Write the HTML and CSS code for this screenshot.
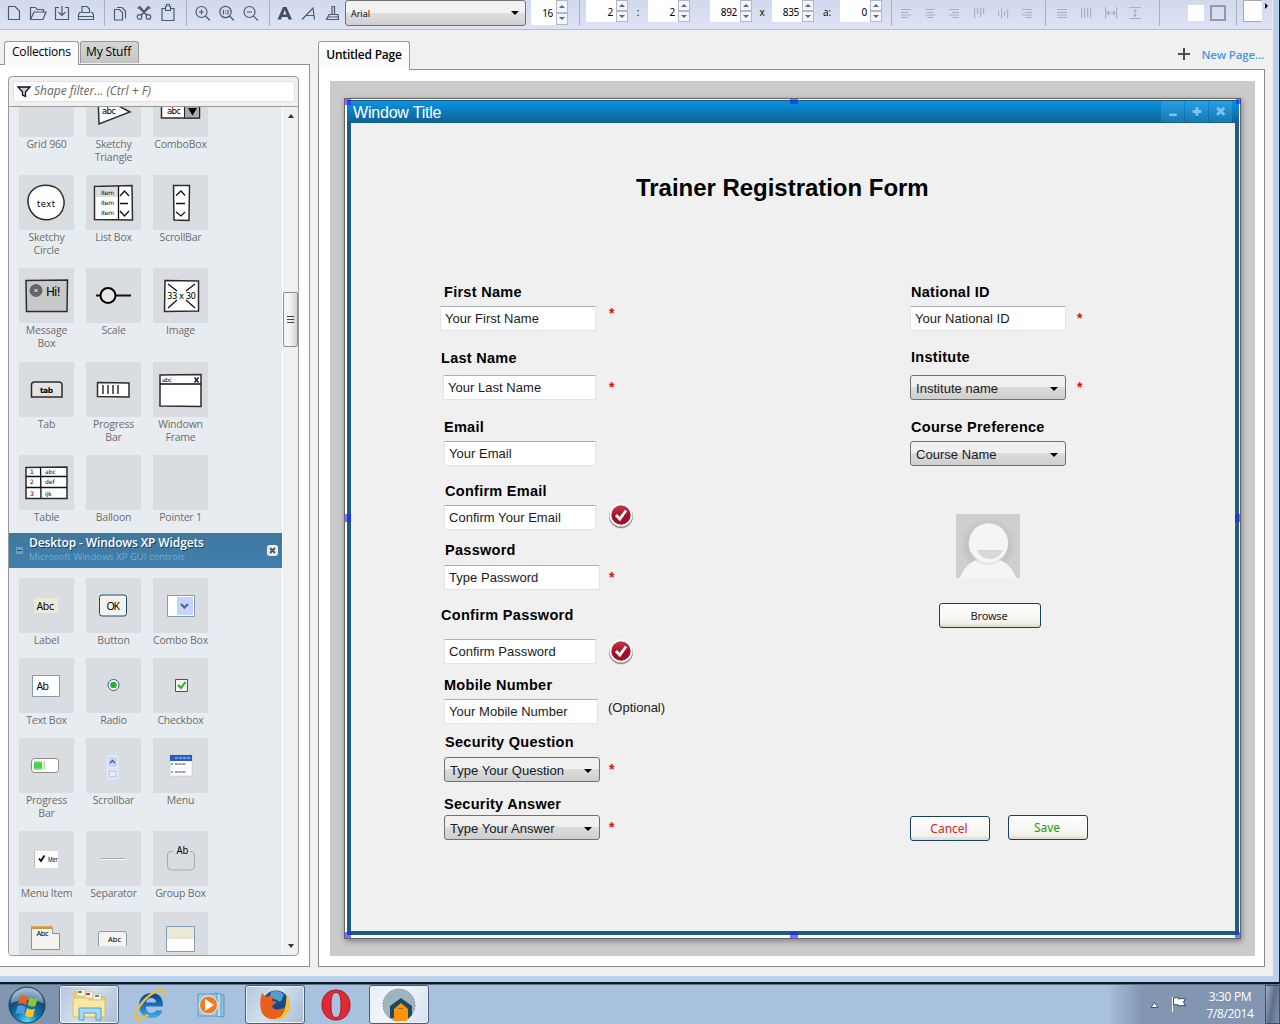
FILE: index.html
```html
<!DOCTYPE html>
<html lang="en">
<head>
<meta charset="utf-8">
<title>Untitled Page</title>
<link rel="stylesheet" href="styles.css">
</head>
<body>
<div class="desktop">
  <div class="app">
    <div class="toolbar">
      <div class="tools">
        <svg viewBox="0 0 24 24"><path d="M7 6.500h6l4.500 4.500v8.500H6.500V6.500z"/></svg>
        <svg viewBox="0 0 24 24"><path d="M4.500 19V7.500h5l1.500 2h6.500V12M4.500 19.500l3.500-7.500h12l-3 7.500z"/></svg>
        <svg viewBox="0 0 24 24"><path d="M9 7.500H5.500v12h13v-12H15M12 6v9M8.500 12l3.500 3.500 3.500-3.500"/></svg>
        <svg viewBox="0 0 24 24"><path d="M8 13V6.500h5l2.500 2.500v4M7 12.500H5.500l-1 2.500v4.500h15V15l-1-2.500H17M8 12.500h8M5 16.500h14"/></svg>
      </div>
      <i class="sep s1"></i>
      <div class="tools">
        <svg viewBox="0 0 24 24"><path d="M6.500 9.500h5l3 3v7.500h-8zM9 7.500h5l3.500 3.500v7.500"/></svg>
        <svg viewBox="0 0 24 24"><path d="M6 7l9 8.500M18 7l-9 8.500M5.500 8.500L8 6.500l6.500 8M18.500 8.500L16 6.500l-6.500 8"/><circle cx="7.500" cy="17" r="2.300"/><circle cx="16.500" cy="17" r="2.300"/></svg>
        <svg viewBox="0 0 24 24"><path d="M9 8.500H6v12h12v-12h-3M9.500 10.500v-4h1v-2h3v2h1v4z"/></svg>
      </div>
      <i class="sep s2"></i>
      <div class="tools">
        <svg viewBox="0 0 24 24"><circle cx="10.500" cy="12" r="5.500"/><path d="M14.500 16l4.500 4.500M8 12h5M10.500 9.500v5"/></svg>
        <svg viewBox="0 0 24 24"><circle cx="10.500" cy="12" r="5.700"/><path d="M14.500 16l4.500 4.500M8.500 10v4.500M13 10v4.500M10.800 10.500v1M10.800 13v1"/></svg>
        <svg viewBox="0 0 24 24"><circle cx="10.500" cy="12" r="5.500"/><path d="M14.500 16l4.500 4.500M8 12h5"/></svg>
      </div>
      <i class="sep s3"></i>
      <div class="tools tools-text">
        <svg viewBox="0 0 24 24"><path class="solid" d="M4.500 19.500L10 7h3.500L19 19.500h-3.500l-1-2.500H9l-1 2.500zM10 14.500h3.500L11.800 10z"/></svg>
        <svg viewBox="0 0 24 24"><path d="M5 19.500L16 8l1.500 11.500M8.500 15.500h8.500"/></svg>
        <svg viewBox="0 0 24 24"><path d="M11 14V6.500h2.500V14M8 14.500h9l.500 5h-12zM7 17h11"/></svg>
      </div>
      <div class="fontbox"><span>Arial</span><b class="caret"></b></div>
      <div class="spin sp-size"><span>16</span><em><b></b><b></b></em></div>
      <i class="sep s4"></i>
      <div class="spin sp-x"><span>2</span><em><b></b><b></b></em></div>
      <label class="colon">:</label>
      <div class="spin sp-y"><span>2</span><em><b></b><b></b></em></div>
      <div class="spin sp-w"><span>892</span><em><b></b><b></b></em></div>
      <label class="times">x</label>
      <div class="spin sp-h"><span>835</span><em><b></b><b></b></em></div>
      <label class="angle">a:</label>
      <div class="spin sp-a"><span>0</span><em><b></b><b></b></em></div>
      <i class="sep s5"></i>
      <div class="tools dim">
        <svg viewBox="0 0 24 24"><path d="M6 9.500h10M6 12.500h7M6 15h10M6 17.500h7"/></svg>
        <svg viewBox="0 0 24 24"><path d="M6 9.500h10M8 12.500h6M6 15h10M8 17.500h6"/></svg>
        <svg viewBox="0 0 24 24"><path d="M6 9.500h10M9 12.500h7M6 15h10M9 17.500h7"/></svg>
        <svg viewBox="0 0 24 24"><path d="M6.500 8v10M9.500 8v6M12.500 8v9M15.500 8v6"/></svg>
        <svg viewBox="0 0 24 24"><path d="M6.500 11v5M9.500 8.500v10M12.500 11v5M15.500 9v9"/></svg>
        <svg viewBox="0 0 24 24"><path d="M6 9.500h10M9 12.500h7M6 15h10M9 17.500h7"/></svg>
      </div>
      <i class="sep s6"></i>
      <div class="tools dim">
        <svg viewBox="0 0 24 24"><path d="M6 9.500h10M6 12.500h10M6 15h10M6 17.500h10"/></svg>
        <svg viewBox="0 0 24 24"><path d="M6.500 8v10M9.500 8v10M12.500 8v10M15.500 8v10"/></svg>
        <svg viewBox="0 0 24 24"><path d="M5.500 7v12M16.500 7v12M7 13h8M9 11l-2 2 2 2M13 11l2 2-2 2"/></svg>
        <svg viewBox="0 0 24 24"><path d="M5 7.500h12M5 18.500h12M11 9v8M9.500 10.500h3M9.500 15.500h3"/></svg>
      </div>
      <i class="sep s7"></i>
      <i class="swatch"></i><i class="swatch ring"></i>
      <i class="sep s8"></i>
      <i class="linebox"></i><i class="more"></i>
    </div>

    <div class="workspace">
      <div class="side">
        <div class="tabs"><span class="tab active">Collections</span><span class="tab">My Stuff</span></div>
        <div class="side-panel">
          <div class="palette">
            <div class="filter"><div class="filter-input">
              <svg width="14" height="12" viewBox="0 0 14 12"><path d="M1 1h12L8.500 6v4.500l-3-1.500V6z" fill="#c3cfdf" stroke="#111" stroke-width="1.300"/></svg>
              <span>Shape filter... (Ctrl + F)</span></div></div>
            <div class="palette-body">
              <div class="shapes">
                <div class="grid sketchy">
                  <div class="item"><svg viewBox="0 0 55 55"></svg><p>Grid 960</p></div>
                  <div class="item"><svg viewBox="0 0 55 55"><path class="box" d="M12 13l32 17-31 12z"/><text class="hand" x="16" y="32" textLength="14">abc</text></svg><p>Sketchy Triangle</p></div>
                  <div class="item"><svg viewBox="0 0 55 55"><path class="box" d="M8.500 22h38v14h-38z"/><path fill="#aaa" stroke="#222" d="M31.500 22h15v14h-15z"/><path d="M35 26h9l-4.500 7.500z"/><text class="hand" x="14" y="32" textLength="14">abc</text></svg><p>ComboBox</p></div>
                  <div class="item"><svg viewBox="0 0 55 55"><path class="box" d="M23 10.500Q32 9 39 14q7 7 6 16-2 12-14 14.500-12 2-19-8Q7 28 10 20q4-8 13-9.500z"/><text class="hand" x="18" y="32" textLength="18">text</text></svg><p>Sketchy Circle</p></div>
                  <div class="item"><svg viewBox="0 0 55 55"><path class="box" d="M8.500 11.500L46 10.500l.500 34.500-38-.500z"/><path fill="#ddd" d="M10 12h22v10H10z"/><path class="ink" d="M32.500 11v33.500M34 21l4.500-5 4.500 5M34 28.500h8M34 36l4.500 5 4.500-5"/><text class="hand tiny" x="15" y="20" textLength="13">item</text><text class="hand tiny" x="15" y="30" textLength="13">item</text><text class="hand tiny" x="15" y="40" textLength="13">item</text></svg><p>List Box</p></div>
                  <div class="item"><svg viewBox="0 0 55 55"><path class="box" d="M20.500 10.500h16l-.500 35-15-.500z"/><path class="ink" d="M23 20.500l5-4.500 4 4.500M23 28.500h9M23 37l5 4 4-4"/></svg><p>ScrollBar</p></div>
                  <div class="item"><svg viewBox="0 0 55 55"><path class="box shade" d="M7 12.500l41.500-.500-.500 31.500H7.500z"/><circle cx="17" cy="22.500" r="6.500" fill="#666"/><path d="M15.500 21l3 3m0-3l-3 3" stroke="#fff"/><text class="hand" x="27" y="28" font-size="12" textLength="15">Hi!</text></svg><p>Message Box</p></div>
                  <div class="item"><svg viewBox="0 0 55 55"><path class="ink" d="M10 27.500h35" style="stroke-width:2"/><circle cx="22" cy="27.500" r="7.500" fill="#e8e8e8" stroke="#000" stroke-width="2"/></svg><p>Scale</p></div>
                  <div class="item"><svg viewBox="0 0 55 55"><path class="box" d="M12 12.500l33.500.500v30l-34 .500z"/><path class="ink" d="M15 16l9 7M42 16l-9 7M15 40l9-8M42 40l-9-8"/><text class="hand" x="14" y="31" textLength="29">33 x 30</text></svg><p>Image</p></div>
                  <div class="item"><svg viewBox="0 0 55 55"><path class="box pale" d="M12.500 35V23q0-3 3-3h24q3.500 0 3.500 3v12z"/><text class="hand heavytxt" x="21" y="31" textLength="13">tab</text></svg><p>Tab</p></div>
                  <div class="item"><svg viewBox="0 0 55 55"><path class="box" d="M11.500 20.500l31.500.500v14l-31.500-.500z"/><path class="ink" d="M17 23v9M22 23v9M27 23v9M32 23v9"/></svg><p>Progress Bar</p></div>
                  <div class="item"><svg viewBox="0 0 55 55"><path class="box" d="M7 13l41-.500v32L7 44z"/><path class="ink" d="M7 22h41M41.500 15.500l4 5m0-5l-4 5"/><text class="hand tiny" x="9" y="20" textLength="10">abc</text></svg><p>Windown Frame</p></div>
                  <div class="item"><svg viewBox="0 0 55 55"><path class="box" d="M7 12.500l41-.500v31.500H7z"/><path class="ink" d="M7 21.500h41M7 32.500h41M21.500 12l.500 31"/><text class="hand tiny" x="11" y="19">1</text><text class="hand tiny" x="11" y="29">2</text><text class="hand tiny" x="11" y="41">3</text><text class="hand tiny" x="26" y="19">abc</text><text class="hand tiny" x="26" y="29">def</text><text class="hand tiny" x="26" y="41">ijk</text></svg><p>Table</p></div>
                  <div class="item"><svg viewBox="0 0 55 55"></svg><p>Balloon</p></div>
                  <div class="item"><svg viewBox="0 0 55 55"></svg><p>Pointer 1</p></div>
                </div>
                <div class="collection">
                  <svg class="fold" width="7" height="7" viewBox="0 0 7 7"><path d="M0 0h7v7H0z" fill="#6f9cbc"/><path d="M1 3.500h5" stroke="#1f4b6d"/></svg>
                  <div><h3>Desktop - Windows XP Widgets</h3><small>Microsoft Windows XP GUI controls</small></div>
                  <svg class="close" width="11" height="11" viewBox="0 0 11 11"><rect width="11" height="11" rx="3" fill="#eee"/><path d="M3 3l5 5m0-5L3 8" stroke="#555" stroke-width="2"/></svg>
                </div>
                <div class="grid xp">
                  <div class="item"><svg viewBox="0 0 55 55"><path fill="#ece9d8" d="M15 20h24v15H15z"/><text class="ui" x="17.500" y="32" textLength="17.500">Abc</text></svg><p>Label</p></div>
                  <div class="item"><svg viewBox="0 0 55 55"><rect x="13.500" y="17" width="27" height="21" rx="2.500" fill="#f4f4ef" stroke="#194a74"/><text class="ui" x="20.500" y="32" textLength="13.500">OK</text></svg><p>Button</p></div>
                  <div class="item"><svg viewBox="0 0 55 55"><path fill="#fff" stroke="#7f9db9" d="M14.500 17.500h27v21h-27z"/><path fill="#c4d4fb" d="M24 19h16v18H24z"/><path d="M28 26l3.500 3.500L35 26" fill="none" stroke="#4d6185" stroke-width="2"/></svg><p>Combo Box</p></div>
                  <div class="item"><svg viewBox="0 0 55 55"><path fill="#fff" stroke="#7f9db9" d="M13.500 17.500h27v21h-27z"/><text class="ui" x="17.500" y="32" textLength="12.500">Ab</text></svg><p>Text Box</p></div>
                  <div class="item"><svg viewBox="0 0 55 55"><circle cx="27.500" cy="27" r="5.500" fill="#fff" stroke="#2c5c8c"/><circle cx="27.500" cy="27" r="3.300" fill="#2fb02f"/></svg><p>Radio</p></div>
                  <div class="item"><svg viewBox="0 0 55 55"><path fill="#f4f4f0" stroke="#2c5c8c" d="M22.500 21.500h12v12h-12z"/><path d="M25 27l3 3 4.500-6" fill="none" stroke="#2ba62b" stroke-width="2"/></svg><p>Checkbox</p></div>
                  <div class="item"><svg viewBox="0 0 55 55"><rect x="12.500" y="20.500" width="27" height="14" rx="3" fill="#fff" stroke="#8c8c80"/><path fill="#41d641" d="M15 23h8v9h-8z"/><path fill="#9be89b" d="M15 23h8v1.500h-8zM15 30.500h8V32h-8zM24.500 23h1.500v9h-1.500z"/></svg><p>Progress Bar</p></div>
                  <div class="item"><svg viewBox="0 0 55 55"><path fill="#c4d4fb" stroke="#eef" d="M21.500 18.500h10v11h-10zM21.500 31.500h10v9h-10z"/><path d="M24 25l2.500-2.500L29 25" fill="none" stroke="#4d6185" stroke-width="1.500"/><path fill="#e6eeff" d="M24 34h5v4h-5z"/></svg><p>Scrollbar</p></div>
                  <div class="item"><svg viewBox="0 0 55 55"><path fill="#fff" stroke="#bbb" stroke-width=".5" d="M17 17h22v21H17z"/><path fill="#2c5bc4" d="M17 17h22v6H17z"/><path d="M22 20h15" stroke="#c9d6f4" stroke-dasharray="3 1"/><path d="M18 26h2m2 0h11M18 34h2m2 0h11" stroke="#444" stroke-dasharray="3 .5"/><path d="M18 30h20" stroke="#ddd" stroke-width=".5"/></svg><p>Menu</p></div>
                  <div class="item"><svg viewBox="0 0 55 55"><path fill="#fff" d="M16 20h23v17H16z"/><path d="M15.500 20v17" stroke="#bbb"/><path d="M20 27.500l2 2.500 3.500-5.500" fill="none" stroke="#000" stroke-width="1.800"/><text class="ui mini" x="29" y="31" textLength="10" lengthAdjust="spacingAndGlyphs">Mer</text></svg><p>Menu Item</p></div>
                  <div class="item"><svg viewBox="0 0 55 55"><path d="M15 27.500h24" stroke="#aca899"/><path d="M15 28.500h24" stroke="#fff"/></svg><p>Separator</p></div>
                  <div class="item"><svg viewBox="0 0 55 55"><path d="M20 20.500h-2q-3.500 0-3.500 3.500v11q0 4 4 4h19q4 0 4-4V24q0-3.500-3.500-3.500h-1" fill="none" stroke="#aaa"/><text class="ui" x="23.500" y="23" textLength="12" lengthAdjust="spacingAndGlyphs">Ab</text></svg><p>Group Box</p></div>
                  <div class="item"><svg viewBox="0 0 55 55"><path fill="#f4f3ee" stroke="#8a949c" d="M12.500 16.500h21v5h7v16h-28z"/><path d="M12 15.500h21.500" stroke="#e5962c" stroke-width="2.500"/><text class="ui mini" x="17.500" y="23.500" textLength="12">Abc</text></svg></div>
                  <div class="item"><svg viewBox="0 0 55 55"><path fill="#f4f4ee" stroke="#8a9ca8" d="M12.500 34V22q0-2.500 2.500-2.500h23q2.500 0 2.500 2.500v12"/><text class="ui mini" x="22" y="29.500" textLength="13">Abc</text></svg></div>
                  <div class="item"><svg viewBox="0 0 55 55"><path fill="#fff" stroke="#7f9db9" d="M13.500 14.500h28v25h-28z"/><path fill="#ece9d8" d="M14 15h27v10H14z"/><path d="M14 26h27" stroke="#cbc7b8"/></svg></div>
                </div>
              </div>
              <div class="scrollbar"><b class="up"></b><div class="thumb"><i></i></div><b class="down"></b></div>
            </div>
          </div>
        </div>
      </div>

      <div class="main">
        <div class="page-tabs"><span class="page-tab">Untitled Page</span>
          <div class="new-page"><svg width="12" height="12" viewBox="0 0 12 12"><path d="M6 0v12M0 6h12" stroke="#444f58" stroke-width="2"/></svg><span>New Page...</span></div></div>
        <div class="page-panel">
          <div class="stage">
            <div class="page">
              <div class="window">
                <div class="titlebar"><span>Window Title</span>
                  <div class="winbtns">
                    <svg viewBox="0 0 23 22"><path d="M8 14.500h8" stroke="#7cc4ee" stroke-width="2.500"/></svg>
                    <svg viewBox="0 0 23 22"><path d="M12 6.500v9M7.500 11h9" stroke="#7cc4ee" stroke-width="3"/></svg>
                    <svg viewBox="0 0 23 22"><path d="M8 7l7.500 7.500m0-7.500L8 14.500" stroke="#7cc4ee" stroke-width="3"/></svg>
                  </div></div>
                <div class="canvas">
                  <h1 class="w-title">Trainer Registration Form</h1>
                  <h2 class="w-l1">First Name</h2><div class="field w-f1">Your First Name</div><b class="star w-s1">*</b>
                  <h2 class="w-l2">Last Name</h2><div class="field w-f2">Your Last Name</div><b class="star w-s2">*</b>
                  <h2 class="w-l3">Email</h2><div class="field w-f3">Your Email</div>
                  <h2 class="w-l4">Confirm Email</h2><div class="field w-f4">Confirm Your Email</div>
                  <svg class="badge w-b1" viewBox="0 0 26 28"><defs><linearGradient id="red" x2="0" y2="1"><stop offset="0" stop-color="#c23a4c"/><stop offset=".55" stop-color="#a50f26"/><stop offset="1" stop-color="#a01024"/></linearGradient></defs><circle cx="13" cy="14.500" r="12" fill="#0003"/><circle cx="13" cy="14" r="11.800" fill="#777"/><circle cx="13" cy="13" r="11.600" fill="#fff"/><circle cx="13" cy="13" r="9.700" fill="url(#red)"/><path d="M8 13l3.800 4L18 8.500" fill="none" stroke="#fff" stroke-width="2.800"/></svg>
                  <h2 class="w-l5">Password</h2><div class="field w-f5">Type Password</div><b class="star w-s5">*</b>
                  <h2 class="w-l6">Confirm Password</h2><div class="field w-f6">Confirm Password</div>
                  <svg class="badge w-b2" viewBox="0 0 26 28"><circle cx="13" cy="14.500" r="12" fill="#0003"/><circle cx="13" cy="14" r="11.800" fill="#777"/><circle cx="13" cy="13" r="11.600" fill="#fff"/><circle cx="13" cy="13" r="9.700" fill="url(#red)"/><path d="M8 13l3.800 4L18 8.500" fill="none" stroke="#fff" stroke-width="2.800"/></svg>
                  <h2 class="w-l7">Mobile Number</h2><div class="field w-f7">Your Mobile Number</div><span class="hint w-opt">(Optional)</span>
                  <h2 class="w-l8">Security Question</h2><div class="combo w-f8">Type Your Question</div><b class="star w-s8">*</b>
                  <h2 class="w-l9">Security Answer</h2><div class="combo w-f9">Type Your Answer</div><b class="star w-s9">*</b>
                  <h2 class="w-l10">National ID</h2><div class="field w-f10">Your National ID</div><b class="star w-s10">*</b>
                  <h2 class="w-l11">Institute</h2><div class="combo w-f11">Institute name</div><b class="star w-s11">*</b>
                  <h2 class="w-l12">Course Preference</h2><div class="combo w-f12">Course Name</div>
                  <svg class="avatar" viewBox="0 0 64 64"><defs><radialGradient id="halo"><stop offset=".68" stop-color="#c0c0c0"/><stop offset="1" stop-color="#cfcfcf"/></radialGradient></defs><path fill="#cfcfcf" d="M0 0h64v64H0z"/><circle cx="32" cy="31" r="28" fill="url(#halo)"/><path d="M4 64c4-12 13-20 28-20s24 8 28 20z" fill="#f5f5f5"/><circle cx="32" cy="31" r="20" fill="#d4d4d4" opacity=".55"/><circle cx="32.500" cy="29" r="19.700" fill="#f5f5f5"/><path d="M21 36h26q-4 9-13 9t-13-9z" fill="#d8d8d8"/></svg>
                  <div class="xpbtn w-browse">Browse</div>
                  <div class="xpbtn w-cancel">Cancel</div>
                  <div class="xpbtn w-save">Save</div>
                </div>
              </div>
              <i class="handle h-nw"></i><i class="handle h-n"></i><i class="handle h-ne"></i><i class="handle h-w"></i><i class="handle h-e"></i><i class="handle h-sw"></i><i class="handle h-s"></i><i class="handle h-se"></i>
            </div>
          </div>
        </div>
      </div>
    </div>
  </div>

  <div class="taskbar">
    <div class="start"><svg width="38" height="38" viewBox="0 0 38 38"><defs><radialGradient id="orb" cx=".5" cy=".95" r=".85"><stop offset="0" stop-color="#4fe0ff"/><stop offset=".35" stop-color="#157cb4"/><stop offset=".75" stop-color="#174a74"/><stop offset="1" stop-color="#7d9ebc"/></radialGradient></defs><circle cx="19" cy="19" r="18" fill="url(#orb)" stroke="#1c3c58"/><path d="M3 17a16 15 0 0 1 32 0q-16-6-32 0z" fill="#b6cfe0" opacity=".5"/><path d="M12 10q4-2 8 1l-2 8q-4-3-8-1z" fill="#e8602c"/><path d="M21.500 11.500q4 2.500 8 .5l-2 8q-4 2-8-1z" fill="#8cc63c"/><path d="M9.500 20q4-2 8 1l-2 8q-4-3-8-1z" fill="#4a9be0"/><path d="M19 22q4 2.500 8 .5l-2 8q-4 2-8-1z" fill="#fbc52c"/></svg></div>
    <div class="task open"><svg width="36" height="34" viewBox="0 0 36 34"><path d="M3 4h10l2 3h8l2 2h9v20H3z" fill="#f0d27c" stroke="#d7b456"/><path d="M6 2h8v6H6zM14 4h8v6h-8zM22 6h8v6h-8z" fill="#fff" stroke="#c8b578" stroke-width=".7"/><path d="M7 3h4v2H7z" fill="#3aa53a"/><path d="M15 5h4v2h-4z" fill="#d33b2c"/><path d="M24 7h4v2h-4z" fill="#3c86d2"/><path d="M2 10h14l2 2h16v17H2z" fill="#f8e8a6" stroke="#e0c069"/><path d="M8 32V20h22v12h-5v-7H13v7z" fill="#a6d9f0" stroke="#4ea0cc"/></svg></div>
    <div class="task"><svg width="36" height="36" viewBox="0 0 36 36"><defs><linearGradient id="ie" x2="0" y2="1"><stop offset="0" stop-color="#123f86"/><stop offset=".5" stop-color="#1c6fc0"/><stop offset="1" stop-color="#35b4ec"/></linearGradient></defs><path d="M31 19.500H14c0 4.500 2.500 6.500 5.500 6.500 2 0 3.500-.7 4.500-2.500h6.500C29 28.500 25 31 19.500 31 12 31 7 26 7 18.500S12 6 19.500 6 31.500 11 31 19.500zM14.200 15.500h10c-.3-3-2.200-4.500-5-4.500s-4.500 1.500-5 4.500z" fill="url(#ie)"/><path d="M16 27.500C9 33.500 4 34 3.500 30 3 24 12 11 22 5.500c8-4.500 12-3 9 3.500" fill="none" stroke="#eebd3c" stroke-width="2.400"/></svg></div>
    <div class="task"><svg width="32" height="32" viewBox="0 0 32 32"><path d="M21 5l7 1v22l-7-1z" fill="#8fc6df" stroke="#5096b8"/><path d="M18 4l7 1v23l-7-1z" fill="#b8dcec" stroke="#5ba1c2"/><path d="M2 5h19v22H2z" fill="#9ccbe4" stroke="#5a9cc0"/><circle cx="12.500" cy="16" r="9" fill="#f07a20" stroke="#fff" stroke-width=".8"/><path d="M9 10l9 6-9 6z" fill="#fff"/></svg></div>
    <div class="task open"><svg width="32" height="32" viewBox="0 0 32 32"><circle cx="17" cy="15" r="13.500" fill="#174a86"/><path d="M12 3q8-3 13 3-2 2-2 5-3 3-5 0-4-1-7-4z" fill="#4fa0cf"/><path d="M27 5q6 8 3 17-5 10-16 9 10-3 12-12 2-8 1-14z" fill="#f8c22c"/><path d="M3 4l4 4q4-2 8 0-3 3-1 4l4 1-5 4q2 5 8 3 3 0 5-2-2 9-10 12-11 1-14-9Q0 12 3 4z" fill="#e8601c"/></svg></div>
    <div class="task"><svg width="30" height="32" viewBox="0 0 30 32"><path fill-rule="evenodd" d="M15 1c8 0 14 6 14 15s-6 15-14 15S1 25 1 16 7 1 15 1zm0 2.500c-4 0-5 5-5 12.500s1 12.500 5 12.500 5-5 5-12.500-1-12.500-5-12.500z" fill="#df2a35" stroke="#a81820"/></svg></div>
    <div class="task open lit"><svg width="34" height="34" viewBox="0 0 34 34"><circle cx="17" cy="17" r="16" fill="#9fb4bf" stroke="#8298a6" stroke-dasharray="2 1"/><path d="M8 30V18l11-8 11 8v9l-4 4z" fill="#1f4a5e"/><path d="M12 33V21l7-6 7 6v10l-2 2z" fill="#ff9407"/><path d="M16 20.500h5" stroke="#a86a20"/></svg></div>
    <div class="tray"><svg width="9" height="6" viewBox="0 0 9 6"><path d="M4.500 .5L8 5.500H1z" fill="#fff" stroke="#456"/></svg>
      <svg width="17" height="17" viewBox="0 0 17 17"><path d="M1.500 1v15M2.500 2q3-1 5 0v1q3-1 7 0l-2 3 2 4q-4-1-7 0V9q-2-1-5 0z" fill="#fff" stroke="#344a60"/><path d="M1.500 1v15" stroke="#fff"/></svg>
      <div class="clock"><span>3:30 PM</span><span>7/8/2014</span></div></div>
    <div class="peek"></div>
  </div>
</div>
</body>
</html>
```
FILE: styles.css
```css
* { box-sizing: border-box; }
body { margin: 0; width: 1280px; height: 1024px; overflow: hidden; font-family: "Open Sans", "Noto Sans", sans-serif; font-size: 12px; color: #000; }
h1, h2, h3, p { margin: 0; }
i, em { font-style: normal; }
.desktop { display: flex; flex-direction: column; height: 1024px; }
.app { height: 984px; display: flex; flex-direction: column; background: #f0f0f0; border-right: 1px solid #0c2836; border-bottom: 2px solid #0a1a24; box-shadow: inset -6px 0 #b9d1ea, inset 0 -6px #b9d1ea; padding: 0 7px 7px 0; flex: none; }

/* toolbar */
.toolbar { display: flex; height: 30px; flex: none; background: linear-gradient(#d2d9ed, #dde3f5); border-bottom: 1px solid #b3bbd6; padding-left: 2px; }
.tools { display: flex; height: 24px; }
.tools svg { width: 24px; height: 24px; fill: none; stroke: #4d5c69; stroke-width: 1.2; flex: none; }
.tools svg .solid { fill: #43525e; fill-rule: evenodd; stroke: none; }
.tools.dim svg { stroke: #a9b0c6; width: 24.2px; }
.sep { width: 1px; height: 26px; background: #aab0c2; flex: none; }
.s1 { margin: 0 3px 0 6px; }
.s2 { margin: 0 4px 0 6px; }
.s3 { margin: 0 3px 0 6px; }
.s4 { margin: 0 6px 0 11px; }
.s5 { margin: 0 3px 0 9px; }
.s6 { margin: 0 5px 0 5px; }
.s7 { margin: 0 28px 0 11px; }
.s8 { margin: 0 6px 0 10px; }
.tools-text { width: 72px; }
.fontbox { width: 181px; height: 26px; flex: none; border: 1px solid #707070; border-radius: 3px; background: linear-gradient(#f2f2f2 0 50%, #dedede 51%, #d0d0d0); display: flex; align-items: center; justify-content: space-between; padding: 0 6px 0 5px; font-size: 9px; }
.caret { width: 0; height: 0; border: 4px solid transparent; border-top-color: #000; border-bottom: 0; }
.spin { display: flex; justify-content: flex-end; flex: none; width: 42px; height: 22px; background: #fff; font: 10px/24px "Noto Sans", sans-serif; letter-spacing: -.3px; }
.spin em { display: flex; flex-direction: column; width: 12px; margin-left: 3px; }
.spin b { flex: 1; border: 1px solid #b4b8c2; background: #f4f5f8; display: flex; align-items: center; justify-content: center; }
.spin b::after { content: ""; border: 3px solid transparent; border-bottom: 3px solid #55689a; border-top: 0; }
.spin b + b::after { border-bottom: 0; border-top: 3px solid #55689a; }
.sp-size { width: 37px; height: 25px; margin-left: 5px; line-height: 27px; }
.toolbar label { font-size: 10px; line-height: 24px; text-align: center; flex: none; }
.colon { width: 20px; }
.sp-w { margin-left: 20px; }
.times { width: 20px; }
.angle { width: 26px; }
.swatch { width: 16px; height: 16px; margin: 5px 6px 0 0; background: #fff; flex: none; }
.ring { border: 2px solid #9299ad; background: none; margin-right: 0; }
.linebox { width: 19px; height: 22px; border: 1px solid #aaa; border-right: 0; background: #fff; flex: none; }
.more { border: 3px solid transparent; border-left-color: #000; border-right: 0; height: 0; margin: 3px 0 0 3px; }

/* workspace */
.workspace { display: flex; height: 937px; gap: 8px; padding-top: 11px; flex: none; }
.side { width: 310px; flex: none; display: flex; flex-direction: column; }
.tabs { display: flex; gap: 1px; padding-left: 4px; height: 23px; }
.tab { height: 22px; border: 1px solid #999; border-bottom: 0; border-radius: 3px 3px 0 0; background: linear-gradient(#d6d6d6, #c4c4c4); line-height: 20px; width: 59px; white-space: nowrap; padding: 0 0 0 5px; letter-spacing: -.15px; }
.tab.active { width: 75px; height: 24px; background: #fafafa; padding-left: 7px; margin-bottom: -1px; z-index: 1; letter-spacing: -.2px; }
.side-panel { height: 903px; border: 1px solid #8f9096; border-left: 0; background: #fff; padding: 11px 10px 10px 8px; }
.palette { height: 880px; border: 1px solid #98999c; border-radius: 4px; background: #f0f0f0; overflow: hidden; display: flex; flex-direction: column; }
.filter { height: 30px; flex: none; padding: 4px 3px 4px 4px; border-bottom: 1px solid #98999c; }
.filter-input { height: 21px; background: #fff; border: 1px solid #e2e3ea; display: flex; align-items: center; gap: 3px; padding-left: 3px; font: italic 12px/17px "Open Sans", sans-serif; color: #666; }
.filter-input span { margin-top: -2px; }
.palette-body { display: flex; flex: 1; min-height: 0; }
.shapes { width: 273px; background: #e7ecf0; overflow: hidden; flex: none; }
.grid { display: grid; grid-template-columns: repeat(3, 55px); column-gap: 12px; padding-left: 10px; }
.sketchy { margin-top: -25px; grid-template-rows: 93px 93px 94px 93px 78px; }
.xp { margin-top: 10px; grid-template-rows: 80px 80px 93px 81px 55px; }
.item { display: flex; flex-direction: column; align-items: center; }
.item > svg { width: 55px; height: 55px; background: #d9dde1; flex: none; }
.item p { font: 10.5px/13px "Open Sans", sans-serif; color: #6d6d6d; text-align: center; width: 58px; margin-top: 1px; letter-spacing: -.2px; }
.box { fill: #fff; stroke: #2c2c2c; stroke-width: 1.5; }
.box.shade { fill: #c9c9c9; }
.box.pale { fill: #e4e4e4; }
.ink { fill: none; stroke: #111; stroke-width: 1.3; }
.hand { font-family: "DejaVu Sans", sans-serif; font-size: 8.5px; }
.hand[font-size] { font-size: 12px; }
.tiny { font-size: 6px; }
.heavytxt { font-weight: bold; font-size: 7.5px; }
.ui { font-family: "Noto Sans", sans-serif; font-size: 10.5px; }
.mini { font-size: 7.5px; }
.collection { height: 35px; background: linear-gradient(#41779c, #3e80ae); display: flex; padding-left: 7px; color: #fff; }
.collection .fold { margin: 14px 6px 0 0; }
.collection h3 { font: 600 12px/16px "Open Sans", sans-serif; margin-top: 2px; letter-spacing: -.12px; text-shadow: 1px 1px #1d4562; }
.collection small { display: block; font-size: 9.5px; line-height: 12px; color: #78abcf; }
.collection > div { width: 238px; white-space: nowrap; }
.collection .close { margin-top: 12px; }
.scrollbar { flex: 1; display: flex; flex-direction: column; align-items: center; border-left: 1px solid #fff; }
.scrollbar .up { border: 3.5px solid transparent; border-bottom: 4px solid #333; border-top: 0; margin-top: 7px; }
.scrollbar .down { border: 3.5px solid transparent; border-top: 4px solid #333; border-bottom: 0; margin-top: 597px; }
.thumb { margin-top: 174px; width: 15px; height: 55px; border: 1px solid #8e8e8e; border-radius: 2px; background: linear-gradient(90deg, #f4f4f4 45%, #d2d2d2); display: flex; align-items: center; justify-content: center; flex: none; }
.thumb i { width: 7px; height: 8px; background: repeating-linear-gradient(#444 0 1px, transparent 1px 3px); }

.main { width: 947px; display: flex; flex-direction: column; }
.page-tabs { display: flex; justify-content: space-between; height: 28px; }
.page-tab { width: 92px; height: 29px; border: 1px solid #999; border-bottom: 0; border-radius: 3px 3px 0 0; background: #fcfcfc; z-index: 1; text-align: center; font-weight: 600; line-height: 25px; letter-spacing: -.2px; white-space: nowrap; }
.new-page { display: flex; align-items: center; gap: 11px; color: #4796e6; font-weight: 600; font-size: 11.5px; letter-spacing: -.15px; padding: 0 1px 2px 0; }
.page-panel { height: 898px; border: 1px solid #8a8b91; background: #fff; padding: 11px 9px 10px 11px; }
.stage { height: 875px; background: #cbcbcb; padding: 17px 0 0 14px; }
.page { position: relative; width: 897px; height: 841px; border: 1px solid #64646c; background: #fff; box-shadow: 1px 2px 6px #0006; padding: 1px 1px 3px 2px; }
.window { height: 835px; background: #1c5d80; border-top: 1px solid #1b5578; padding: 0 4px 4px 4px; }
.titlebar { height: 22px; margin: 0 -4px; padding: 0 12px 0 6px; background: linear-gradient(#0494e6, #14608f); display: flex; justify-content: space-between; color: #fff; font: 16px/23px "Liberation Sans", Arial, sans-serif; letter-spacing: -.2px; }
.winbtns { display: flex; gap: 1px; padding-right: 1px; margin-right: -6px; }
.winbtns svg { width: 23px; height: 21px; background: linear-gradient(#26a0e8, #1878b0); }
.canvas { position: relative; height: 808px; background: #f0f0f0; font-family: "Liberation Sans", Arial, sans-serif; font-size: 13px; }
.canvas > * { position: absolute; white-space: nowrap; }
.canvas h1 { font-size: 24px; line-height: 28px; letter-spacing: -.03px; }
.canvas h2 { font-size: 14.5px; line-height: 16px; letter-spacing: .28px; }
.field { width: 152px; height: 25px; border: 1px solid #e1e3e8; border-top-color: #abadb3; border-radius: 1px; background: #fff; line-height: 23px; padding-left: 4px; letter-spacing: .03px; color: #1a1a24; }
.combo { width: 156px; height: 25px; border: 1px solid #707070; border-radius: 3px; background: linear-gradient(#f0f0f0 0 48%, #dcdcdc 50%, #cecece); line-height: 25px; padding-left: 5px; letter-spacing: .03px; color: #1a1a24; }
.combo::after { content: ""; position: absolute; right: 7px; top: 11px; border: 4px solid transparent; border-top-color: #000; border-bottom: 0; }
.star { color: #e01010; font-size: 14px; line-height: 18px; }
.hint { line-height: 16px; letter-spacing: 0; color: #222; }
.badge { width: 26px; height: 28px; }
.xpbtn { border: 1px solid #12406a; border-radius: 3px; background: linear-gradient(#fff, #f4f3ee 80%, #dcd8cc); height: 25px; line-height: 24px; text-align: center; font-family: "Noto Sans", sans-serif; font-size: 12px; }
/* widget places on the drawing canvas */
.w-title { left: 285px; top: 51px; }
.w-l1 { left: 93px; top: 161px; } .w-f1 { left: 89px; top: 183px; width: 156px; } .w-s1 { left: 258px; top: 181px; }
.w-l2 { left: 90px; top: 227px; } .w-f2 { left: 92px; top: 252px; width: 153px; } .w-s2 { left: 258px; top: 255px; }
.w-l3 { left: 93px; top: 296px; } .w-f3 { left: 93px; top: 318px; }
.w-l4 { left: 94px; top: 360px; } .w-f4 { left: 93px; top: 382px; } .w-b1 { left: 257px; top: 379px; }
.w-l5 { left: 94px; top: 419px; } .w-f5 { left: 93px; top: 442px; width: 156px; } .w-s5 { left: 258px; top: 445px; }
.w-l6 { left: 90px; top: 484px; } .w-f6 { left: 93px; top: 516px; } .w-b2 { left: 257px; top: 515px; }
.w-l7 { left: 93px; top: 554px; } .w-f7 { left: 93px; top: 576px; width: 154px; } .w-opt { left: 257px; top: 577px; }
.w-l8 { left: 94px; top: 611px; } .w-f8 { left: 93px; top: 634px; } .w-s8 { left: 258px; top: 637px; }
.w-l9 { left: 93px; top: 673px; } .w-f9 { left: 93px; top: 692px; } .w-s9 { left: 258px; top: 695px; }
.w-l10 { left: 560px; top: 161px; } .w-f10 { left: 559px; top: 183px; width: 156px; } .w-s10 { left: 726px; top: 186px; }
.w-l11 { left: 560px; top: 226px; } .w-f11 { left: 559px; top: 252px; } .w-s11 { left: 726px; top: 255px; }
.w-l12 { left: 560px; top: 296px; } .w-f12 { left: 559px; top: 318px; }
.avatar { left: 605px; top: 391px; width: 64px; height: 64px; }
.w-browse { left: 588px; top: 480px; width: 102px; font-size: 11px; letter-spacing: -.2px; color: #222; padding-right: 2px; }
.w-cancel { left: 559px; top: 693px; width: 80px; color: #e02020; padding-right: 2px; }
.w-save { left: 657px; top: 692px; width: 80px; color: #1a9a1a; padding-right: 2px; }
.handle { position: absolute; background: #2323ffa0; width: 6px; height: 6px; }
.h-nw { left: 0; top: 0; } .h-n { left: 445px; top: 0; width: 8px; height: 5px; } .h-ne { right: -1px; top: 0; width: 5px; height: 5px; }
.h-w { left: 0; top: 415px; height: 8px; } .h-e { right: 0; top: 415px; width: 5px; height: 8px; }
.h-sw { left: 0; bottom: 0; } .h-s { left: 445px; bottom: 0; width: 8px; } .h-se { right: 0; bottom: 0; width: 5px; }

/* taskbar */
.taskbar { height: 40px; display: flex; background: #a8c1de; border-top: 1px solid #5c7088; gap: 4px; }
.start { width: 59px; background: linear-gradient(90deg, #8297b2, #7e93ae); margin-right: -4px; padding: 1px 0 0 8px; }
.task { width: 58px; display: flex; align-items: center; justify-content: center; }
.task.open { width: 60px; margin-right: -2px; border: 1px solid #4d6078; border-radius: 3px; box-shadow: inset 0 0 0 1px #e8f0fa; background: linear-gradient(120deg, #b4c6dc, #d4e0ee 45%, #a9bdd6); }
.task.lit { background: linear-gradient(120deg, #e8eff8, #f2f6fb 45%, #d3e0ef); }
.tray { margin-left: auto; width: 158px; display: flex; align-items: center; background: linear-gradient(90deg, #a8c1de, #8296b1 22%, #8296b1); padding-left: 43px; gap: 12px; margin-right: -4px; color: #fff; }
.clock { display: flex; flex-direction: column; align-items: center; font-size: 12px; line-height: 17px; letter-spacing: -.35px; width: 50px; margin-left: 5px; }
.peek { width: 15px; border: 1px solid #3f5068; background: linear-gradient(100deg, #9fb0c4, #5e7088 50%, #8494aa); }
```
